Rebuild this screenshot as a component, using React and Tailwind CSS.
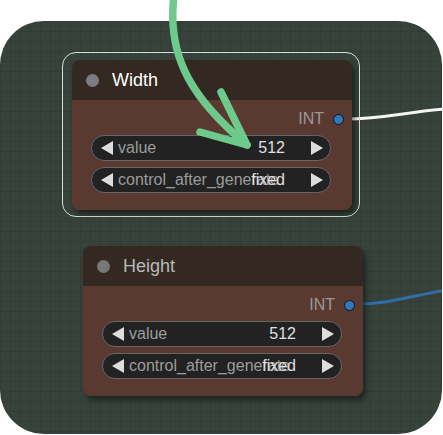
import React from "react";

function LeftTri() {
  return (
    <svg width="12" height="14" viewBox="0 0 12 14" className="shrink-0">
      <polygon points="12,0 12,14 0,7" fill="#dddddd" />
    </svg>
  );
}
function RightTri() {
  return (
    <svg width="12" height="14" viewBox="0 0 12 14" className="shrink-0">
      <polygon points="0,0 0,14 12,7" fill="#dddddd" />
    </svg>
  );
}

function Widget({ label, value }) {
  return (
    <div className="relative flex h-[26px] items-center rounded-full border border-[#666] bg-[#222] pl-[9px] pr-[7px]">
      <LeftTri />
      <span className="ml-[5px] whitespace-nowrap text-[16px] leading-none text-[#9c9c9c]">{label}</span>
      <span className="absolute right-[45px] top-1/2 -translate-y-1/2 whitespace-nowrap text-[16px] leading-none text-[#e0e0e0]">
        {value}
      </span>
      <span className="ml-auto">
        <RightTri />
      </span>
    </div>
  );
}

function Node({ title, selected, className }) {
  return (
    <div className={"absolute w-[280px] rounded-[8px] shadow-[3px_4px_5px_rgba(0,0,0,0.45)] " + className}>
      <div className="flex h-10 items-center rounded-t-[8px] bg-[#332922] pl-[14px]">
        <div className={"h-[13px] w-[13px] rounded-full " + (selected ? "bg-[#7c7c82]" : "bg-[#777]")} />
        <span className={"ml-[13px] text-[18px] leading-none " + (selected ? "text-white" : "text-[#b9b9b9]")}>{title}</span>
      </div>
      <div className="flex flex-col rounded-b-[8px] bg-[#593930] pb-[17px] pt-[8px]">
        <div className="flex h-[22px] items-center justify-end pr-[8px]">
          <span className="text-[16px] leading-none text-[#9a9a9a]">INT</span>
          <div className="ml-[9px] h-[11px] w-[11px] rounded-full border border-[#111] bg-[#2f78bf]" />
        </div>
        <div className="mt-[5px] flex flex-col gap-[6px] pl-[19px] pr-[21px]">
          <Widget label="value" value="512" />
          <Widget label="control_after_generate" value="fixed" />
        </div>
      </div>
    </div>
  );
}

export default function App() {
  return (
    <div className="relative h-[435px] w-[443px] overflow-hidden bg-white font-['Liberation_Sans',Arial,sans-serif]">
      <div className="relative mt-[21px] h-[413px] w-[442px] overflow-hidden rounded-[44px] bg-[#37423a] bg-[image:linear-gradient(to_right,rgba(0,0,0,0.08)_1px,transparent_1px),linear-gradient(to_bottom,rgba(0,0,0,0.08)_1px,transparent_1px)] bg-[size:10px_10px]">
        <svg className="pointer-events-none absolute left-0 top-0" width="442" height="413">
          <path d="M345 98 C 385 98, 405 91, 446 88" stroke="#f4f4f4" strokeWidth="3" fill="none" />
          <path d="M356 283 C 390 283, 410 275, 446 269" stroke="#2f6ea6" strokeWidth="3" fill="none" />
        </svg>
        <div className="absolute left-[62px] top-[31px] h-[165px] w-[298px] rounded-[14px] border-[1.5px] border-[#dcdcdc]" />
        <Node title="Width" selected className="left-[72px] top-[39px]" />
        <Node title="Height" className="left-[83px] top-[225px]" />
      </div>
      <svg className="pointer-events-none absolute left-0 top-0" width="443" height="435">
        <g stroke="#6dca8c" strokeWidth="7.5" fill="none" strokeLinecap="round" strokeLinejoin="round">
          <path d="M174 -4 C 166 60, 196 102, 247 145" />
          <path d="M200 132 L 247 145 L 221 92" />
        </g>
      </svg>
    </div>
  );
}
